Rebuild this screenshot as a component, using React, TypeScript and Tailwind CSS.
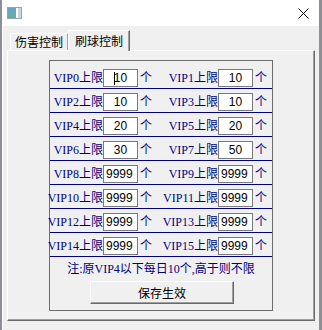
import React from "react";

const cjk = { fontFamily: '"Liberation Serif", "Noto Sans CJK SC", serif' };
const ui = { fontFamily: '"Noto Sans CJK SC", "Liberation Sans", sans-serif' };
const num = { fontFamily: '"Liberation Sans", sans-serif' };

type Cell = { name: string; val: string };

const rows: [Cell, Cell][] = [
  [{ name: "VIP0", val: "10" }, { name: "VIP1", val: "10" }],
  [{ name: "VIP2", val: "10" }, { name: "VIP3", val: "10" }],
  [{ name: "VIP4", val: "20" }, { name: "VIP5", val: "20" }],
  [{ name: "VIP6", val: "30" }, { name: "VIP7", val: "50" }],
  [{ name: "VIP8", val: "9999" }, { name: "VIP9", val: "9999" }],
  [{ name: "VIP10", val: "9999" }, { name: "VIP11", val: "9999" }],
  [{ name: "VIP12", val: "9999" }, { name: "VIP13", val: "9999" }],
  [{ name: "VIP14", val: "9999" }, { name: "VIP15", val: "9999" }],
];

function Box({ v, cursor }: { v: string; cursor?: boolean }) {
  const short = v.length <= 2;
  return (
    <div
      className={
        "w-[35px] h-[18px] bg-white border border-[#7a7a7a] flex items-center text-[12px] text-black leading-none " +
        (short ? "justify-center" : "justify-start pl-[2px]")
      }
      style={num}
    >
      {cursor && <span className="w-px h-[13px] bg-black -mr-px" />}
      <span>{v}</span>
    </div>
  );
}

function Label({ name, w }: { name: string; w: string }) {
  return (
    <div className={w + " h-[18px] flex items-center justify-end whitespace-nowrap text-[12px] text-[#000080] leading-none"} style={cjk}>
      {name}上限
    </div>
  );
}

function Row({ r, first, idx }: { r: [Cell, Cell]; first: boolean; idx: number }) {
  return (
    <div
      className={
        "flex items-end pb-[1px] border-b border-[#000080] " + (first ? "h-[28px]" : "h-[24px]")
      }
    >
      <Label name={r[0].name} w="w-[53px]" />
      <Box v={r[0].val} cursor={idx === 0} />
      <div className="w-[28px] h-[18px] flex items-center pl-[2px] text-[12px] text-[#000080] leading-none" style={cjk}>
        个
      </div>
      <Label name={r[1].name} w="w-[52px]" />
      <Box v={r[1].val} />
      <div className="w-[19px] h-[18px] flex items-center pl-[2px] text-[12px] text-[#000080] leading-none" style={cjk}>
        个
      </div>
    </div>
  );
}

export default function App() {
  return (
    <div className="w-[322px] h-[330px] bg-[#8e8e96] flex overflow-hidden">
      <div className="ml-[2px] w-[317px] h-full bg-[#f0f0f0] border-l border-white flex flex-col">
        {/* title bar */}
        <div className="h-[26px] bg-white flex items-center justify-between shrink-0">
          <svg width="15" height="12" viewBox="0 0 15 12" className="ml-[4px] mt-[0px]">
            <defs>
              <linearGradient id="g" x1="0" y1="0" x2="0" y2="1">
                <stop offset="0" stopColor="#6aa0d8" />
                <stop offset="1" stopColor="#5fb58a" />
              </linearGradient>
            </defs>
            <rect x="0.5" y="0.5" width="14" height="11" fill="#ffffff" stroke="#9aa4b0" />
            <rect x="1" y="1" width="8" height="10" fill="url(#g)" />
            <rect x="11" y="1" width="3" height="10" fill="#c8d4e0" />
          </svg>
          <svg width="11" height="11" viewBox="0 0 11 11" className="mr-[10px]">
            <path d="M0.5 0.5 L10.5 10.5 M10.5 0.5 L0.5 10.5" stroke="#000" strokeWidth="1" />
          </svg>
        </div>
        {/* body */}
        <div className="pl-[4px] pt-[4px] flex flex-col">
          {/* tabs */}
          <div className="flex items-end h-[20px] pl-[3px] relative z-10">
            <div
              className="w-[58px] h-[17px] border-t border-l border-white border-r border-r-[#a0a0a0] flex items-center justify-center text-[12px] text-black leading-none"
              style={ui}
            >
              伤害控制
            </div>
            <div
              className="w-[62px] h-[21px] -mb-px bg-[#f0f0f0] border-t border-l border-white border-r border-r-[#696969] shadow-[inset_-1px_0_0_#a0a0a0] flex items-center justify-center text-[12px] text-black leading-none pb-[1px]"
              style={ui}
            >
              刷球控制
            </div>
          </div>
          {/* panel */}
          <div className="w-[308px] h-[271px] border-t border-l border-white border-r border-b border-r-[#696969] border-b-[#696969] shadow-[inset_-1px_-1px_0_#a0a0a0]">
            <div className="ml-[41px] mt-[9px] w-[224px] h-[251px] border border-[#6d6d6d] flex flex-col">
              {rows.map((r, i) => (
                <Row key={i} r={r} first={i === 0} idx={i} />
              ))}
              <div className="h-[24px] flex items-center justify-center text-[12px] text-[#000080] leading-none whitespace-nowrap" style={cjk}>
                注:原VIP4以下每日10个,高于则不限
              </div>
              <div className="flex justify-center">
                <div
                  className="ml-[2px] w-[144px] h-[23px] border-t border-l border-white border-r border-b border-r-[#696969] border-b-[#696969] shadow-[inset_-1px_-1px_0_#a0a0a0] bg-[#f0f0f0] flex items-center justify-center text-[12px] text-black leading-none"
                  style={ui}
                >
                  保存生效
                </div>
              </div>
            </div>
          </div>
        </div>
      </div>
    </div>
  );
}
